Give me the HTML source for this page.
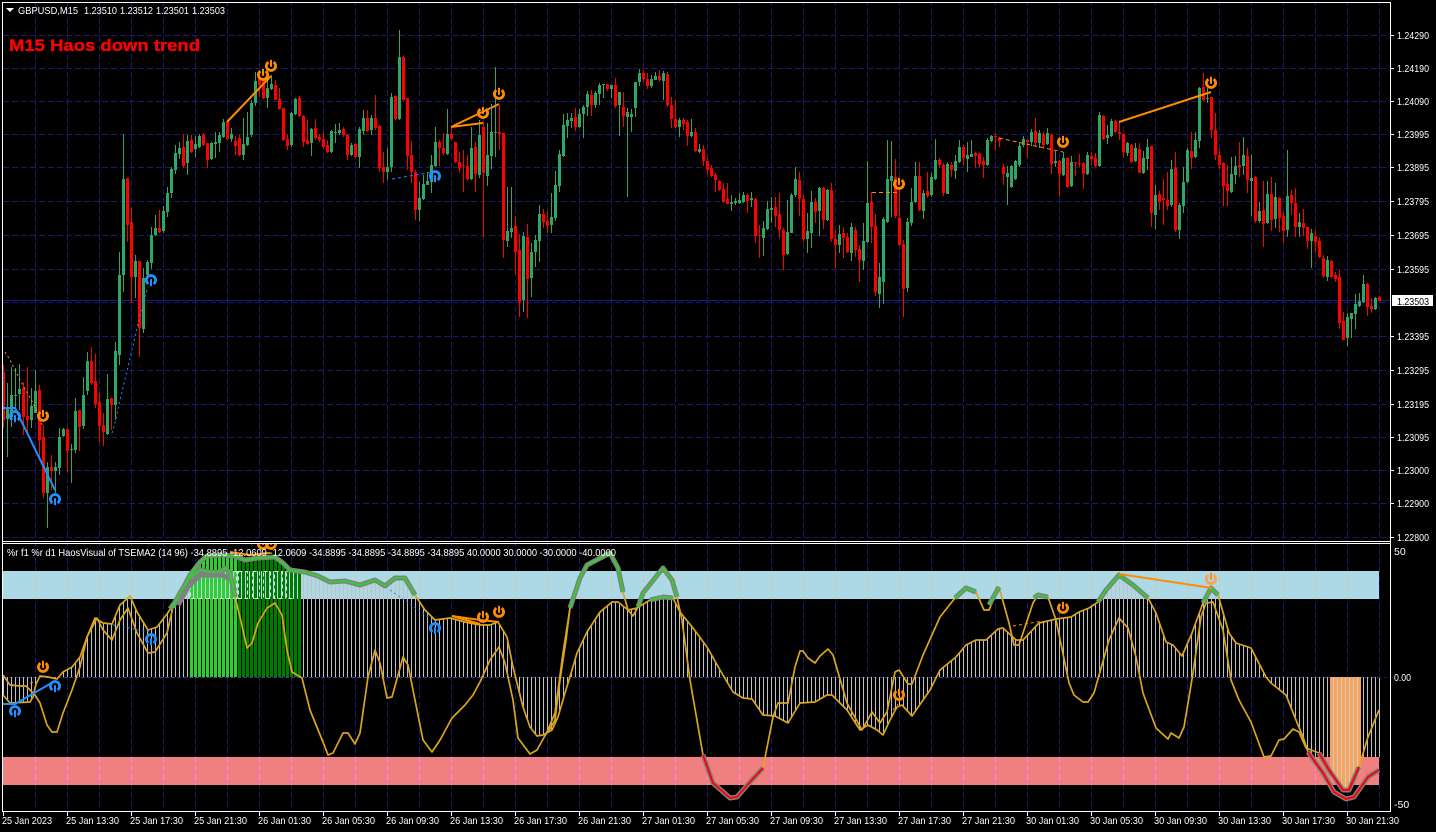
<!DOCTYPE html>
<html><head><meta charset="utf-8"><title>GBPUSD,M15</title>
<style>
html,body{margin:0;padding:0;background:#000;width:1436px;height:832px;overflow:hidden}
svg{display:block}
text{font-family:"Liberation Sans",Arial,sans-serif;font-size:10.5px;fill:#fff}
.c{shape-rendering:crispEdges}
path.c{fill:none}
.w{stroke-width:1}.b{stroke-width:3}
.g{fill:none;stroke:#daa520;stroke-width:1.7;stroke-linejoin:round}
.t{fill:none;stroke:#808080;stroke-width:5;stroke-linejoin:round}
.i{fill:none;stroke:#32cd32;stroke-width:2;stroke-linejoin:round}
.r{fill:none;stroke:#f00;stroke-width:2;stroke-linejoin:round}
.ot{fill:none;stroke:#ff8c00;stroke-width:2}
.bt{fill:none;stroke:#1e90ff;stroke-width:2}
</style></head><body>
<svg xmlns="http://www.w3.org/2000/svg" width="1436" height="832" viewBox="0 0 1436 832">
<defs>
<pattern id="vg" x="3" y="0" width="32" height="9" patternUnits="userSpaceOnUse"><rect width="1" height="6" fill="#191970"/></pattern>
<pattern id="vb" x="3" y="0" width="32" height="9" patternUnits="userSpaceOnUse"><rect width="1" height="6" fill="#c8cca0"/></pattern>
<pattern id="vr" x="3" y="0" width="32" height="9" patternUnits="userSpaceOnUse"><rect width="1" height="6" fill="#ff80ff"/></pattern>
<pattern id="hs" x="3" y="0" width="4" height="4" patternUnits="userSpaceOnUse"><rect width="1" height="4" fill="#c0c0c0"/></pattern>
<pattern id="gl" x="2" y="0" width="4" height="4" patternUnits="userSpaceOnUse"><rect width="3" height="4" fill="#32cd32"/></pattern>
<pattern id="gd" x="2" y="0" width="4" height="4" patternUnits="userSpaceOnUse"><rect width="3" height="4" fill="#007a00"/></pattern>
<pattern id="or" x="2" y="0" width="4" height="4" patternUnits="userSpaceOnUse"><rect width="4" height="4" fill="#d8c8b8"/><rect width="3" height="4" fill="#f4a460"/></pattern>
<g id="o"><path d="M-2.6-3.9A4.6 4.6 0 1 0 2.6-3.9" fill="none" stroke="#ff8c00" stroke-width="2.8"/><path d="M0-6.2V.8" stroke="#ff8c00" stroke-width="2" fill="none"/></g>
<g id="l"><path d="M-2.6-3.9A4.6 4.6 0 1 0 2.6-3.9" fill="none" stroke="#ffa24d" stroke-width="2.8"/><path d="M0-6.2V.8" stroke="#ff8c00" stroke-width="2" fill="none"/></g>
<g id="u"><path d="M-2.6 3.9A4.6 4.6 0 1 1 2.6 3.9" fill="none" stroke="#1e90ff" stroke-width="2.8"/><path d="M0 6.2V-.8" stroke="#1e90ff" stroke-width="2" fill="none"/></g>
<clipPath id="pc"><rect x="3" y="544" width="1387" height="267"/></clipPath>
</defs>
<rect width="1436" height="832" fill="#000"/>

<!-- main grid -->
<rect x="4" y="3" width="1386" height="538" fill="url(#vg)" class="c"/>
<path class="c" stroke="#191970" stroke-dasharray="6 3" d="M3 35.5H1390M3 68.5H1390M3 101.5H1390M3 134.5H1390M3 167.5H1390M3 201.5H1390M3 235.5H1390M3 269.5H1390M3 302.5H1390M3 336.5H1390M3 370.5H1390M3 404.5H1390M3 437.5H1390M3 470.5H1390M3 503.5H1390M3 537.5H1390"/>
<path class="c" stroke="#1c1c8c" d="M3 300.5H1390"/>

<!-- green candles -->
<g transform="translate(.5 0)">
<path class="c w" stroke="#30a565" d="M7 383V457M11 367V427M15 368V413M19 364V410M31 388V428M35 370V413M47 462V528M55 462V493M59 428V475M63 428V437M71 444V483M75 398V453M83 377V429M87 352V395M107 374V435M115 342V420M119 252V365M123 134V292M135 255V298M143 268V333M147 260V283M151 227V269M155 215V236M163 206V233M167 187V217M171 167V198M175 145V174M179 142V159M187 135V175M195 136V157M199 134V148M211 142V160M215 132V158M219 132V152M223 119V138M231 128V142M243 118V160M247 112V146M251 100V137M255 72V106M267 78V108M271 75V90M291 112V147M295 98V115M311 128V156M331 130V153M335 124V143M339 123V135M351 143V156M359 127V168M363 110V135M371 115V135M387 148V180M391 93V172M399 30V120M419 182V221M423 175V200M427 172V185M431 155V193M435 127V167M447 109V155M471 127V180M479 120V178M487 123V186M491 104V169M495 67V157M507 187V247M511 187V238M523 232V312M531 243V297M535 235V267M539 205V262M551 193V233M555 171V221M559 150V192M563 114V157M567 113V138M571 113V128M579 109V128M583 105V138M587 91V116M595 91V108M599 83V105M603 84V98M611 85V98M619 92V136M627 108V197M631 109V132M635 82V117M639 69V86M651 75V88M655 72V80M663 71V100M679 118V137M691 119V137M699 144V153M731 195V211M735 198V205M739 193V204M743 192V203M751 192V207M763 221V256M767 201V230M771 197V223M787 200V255M791 193V233M795 167V197M807 213V253M811 191V248M819 187V236M827 189V221M839 225V253M851 223V261M863 223V270M867 161V243M879 263V308M883 217V304M887 140V223M891 141V217M907 218V292M911 188V226M915 162V203M923 190V219M931 173V197M935 139V180M947 162V194M955 155V179M959 140V163M967 142V172M971 140V157M987 138V166M991 135V142M1007 166V205M1011 165V188M1015 160V180M1019 142V167M1023 136V147M1031 129V146M1039 130V148M1047 128V145M1055 151V167M1063 152V176M1071 156V187M1087 152V175M1099 112V167M1107 125V144M1111 119V137M1127 142V156M1135 143V162M1143 151V174M1147 139V170M1155 185V229M1171 160V207M1179 203V239M1183 167V213M1187 148V183M1195 132V158M1199 87V148M1207 88V103M1231 157V193M1235 156V184M1243 137V175M1251 155V216M1259 202V223M1267 181V224M1275 183V228M1287 150V237M1299 213V237M1311 229V268M1327 256V281M1347 313V346M1351 313V338M1355 294V329M1359 293V307M1363 275V303M1375 297V310"/>
<path class="c b" stroke="#30a565" d="M7 408V419M11 395V417M15 395V396M19 389V394M31 406V420M35 391V413M47 467V493M55 467V471M59 437V468M63 429V436M71 449V450M75 411V450M83 395V426M87 361V391M107 399V434M115 351V405M119 275V355M123 179V275M135 261V277M143 278V329M147 262V275M151 235V263M155 228V235M163 211V231M167 193V212M171 169V193M175 153V170M179 148V154M187 141V163M195 144V149M199 136V147M211 143V159M215 142V144M219 135V143M223 122V137M231 134V139M243 144V155M247 137V145M251 103V135M255 81V103M267 88V98M271 84V89M291 113V145M295 99V114M311 129V143M331 131V152M335 132V133M339 130V133M351 145V155M359 129V157M363 118V131M371 118V130M387 167V172M391 97V167M399 57V119M419 198V210M423 184V199M427 181V185M431 165V182M435 142V166M447 134V154M471 148V179M479 135V175M487 155V176M491 132V156M495 132V133M507 231V241M511 228V232M523 236V300M531 252V278M535 240V252M539 214V241M551 217V225M555 185V218M559 154V186M563 125V156M567 120V126M571 118V121M579 114V127M583 107V114M587 94V107M595 93V105M599 85V94M603 84V85M611 85V89M619 92V105M627 112V117M631 114V117M635 82V108M639 73V82M651 79V86M655 76V80M663 73V81M679 120V127M691 132V136M699 149V152M731 202V204M735 201V203M739 200V203M743 195V202M751 198V200M763 228V238M767 209V229M771 208V210M787 232V254M791 195V233M795 179V195M807 231V239M811 202V233M819 188V211M827 190V220M839 234V245M851 227V253M863 241V261M867 203V242M879 277V294M883 219V282M887 179V222M891 176V181M907 222V288M911 202V223M915 176V202M923 193V211M931 177V195M935 160V179M947 164V194M955 161V171M959 147V162M967 155V159M971 154V157M987 140V165M991 136V141M1007 173V177M1011 166V187M1015 161V179M1019 146V165M1023 139V145M1031 132V142M1039 133V143M1047 133V144M1055 161V163M1063 158V175M1071 162V186M1087 155V174M1099 115V166M1107 135V138M1111 121V136M1127 143V153M1135 148V161M1143 158V173M1147 147V159M1155 195V215M1171 169V205M1179 205V230M1183 182V206M1187 150V182M1195 140V157M1199 88V141M1207 98V99M1231 174V192M1235 166V175M1243 155V166M1251 178V181M1259 211V221M1267 194V223M1275 197V219M1287 196V230M1299 222V227M1311 233V241M1327 260V277M1347 317V338M1351 313V319M1355 304V314M1359 301V306M1363 284V302M1375 298V309"/>
<!-- red candles -->
<path class="c w" stroke="#f00" d="M3 365V428M23 382V435M27 367V433M39 385V457M43 425V498M51 455V490M67 428V472M79 410V451M91 347V385M95 354V408M99 393V442M103 413V446M111 398V430M127 178V242M131 207V303M139 261V357M159 210V233M183 134V168M191 135V153M203 133V146M207 143V168M227 122V140M235 136V155M239 135V156M259 77V97M263 78V99M275 80V100M279 88V110M283 108V141M287 134V150M299 96V117M303 115V147M307 120V145M315 119V140M319 134V142M323 132V148M327 140V153M343 127V137M347 134V160M355 143V158M367 110V132M375 95V130M379 125V172M383 152V183M395 95V120M403 56V101M407 98V170M411 141V183M415 170V220M439 140V166M443 133V155M451 127V140M455 142V163M459 152V173M463 150V192M467 155V180M475 142V192M483 122V237M499 105V150M503 133V258M515 216V274M519 234V317M527 224V318M543 209V228M547 211V233M575 108V131M591 90V116M607 84V91M615 78V108M623 92V127M643 70V82M647 73V89M659 70V82M667 72V107M671 97V128M675 100V128M683 118V130M687 120V146M695 128V152M703 145V166M707 158V175M711 165V177M715 173V192M719 180V191M723 183V203M727 183V204M747 193V213M755 198V243M759 225V258M775 197V227M779 193V239M783 228V270M799 172V216M803 195V242M815 198V223M823 187V229M831 183V242M835 230V268M843 227V258M847 233V253M855 227V257M859 245V282M871 192V243M875 214V296M895 159V218M899 187V246M903 240V317M919 162V211M927 172V198M939 158V168M943 163V196M951 162V177M963 145V165M975 152V168M979 153V167M983 157V178M995 133V151M999 137V147M1003 164V185M1027 140V158M1035 118V146M1043 132V148M1051 134V174M1059 160V197M1067 158V188M1075 162V176M1079 154V167M1083 162V189M1091 152V165M1095 153V167M1103 115V140M1115 120V133M1119 122V140M1123 133V157M1131 144V163M1139 143V173M1151 146V227M1159 191V210M1163 179V225M1167 172V210M1175 152V232M1191 132V169M1203 73V101M1211 97V138M1215 113V160M1219 150V170M1223 162V206M1227 165V206M1239 142V177M1247 148V193M1255 176V223M1263 181V247M1271 177V231M1279 197V232M1283 212V243M1291 190V215M1295 188V237M1303 209V236M1307 227V249M1315 230V252M1319 237V258M1323 255V278M1331 260V278M1335 272V282M1339 270V329M1343 312V340M1367 283V316M1371 298V313M1379 296V301"/>
<path class="c b" stroke="#f00" d="M3 372V420M23 388V417M27 416V420M39 390V440M43 437V493M51 467V471M67 429V451M79 410V427M91 361V383M95 381V404M99 402V426M103 425V432M111 398V405M127 178V225M131 222V277M139 261V328M159 228V232M183 147V166M191 140V152M203 135V145M207 143V160M227 122V139M235 141V146M239 138V155M259 79V85M263 78V98M275 85V100M279 99V109M283 108V140M287 139V146M299 98V116M303 116V142M307 140V144M315 128V138M319 137V140M323 139V147M327 145V152M343 129V135M347 135V155M355 144V157M367 118V131M375 118V128M379 126V168M383 167V172M395 96V119M403 57V100M407 98V156M411 155V172M415 172V210M439 142V148M443 148V153M451 134V139M455 142V162M459 162V168M463 165V166M467 166V179M475 147V174M483 127V173M499 132V134M503 133V240M515 226V252M519 250V302M527 237V279M543 214V222M547 221V226M575 117V127M591 95V105M607 84V89M615 85V106M623 107V116M643 73V79M647 79V86M659 76V80M667 74V105M671 105V119M675 119V127M683 120V124M687 122V136M695 132V151M703 149V161M707 161V170M711 168V176M715 175V180M719 181V190M723 189V202M727 199V204M747 195V201M755 199V236M759 235V236M775 207V216M779 214V230M783 230V255M799 180V199M803 199V239M815 202V212M823 188V220M831 190V239M835 239V245M843 233V238M847 237V252M855 230V250M859 249V260M871 202V227M875 226V292M895 177V216M899 218V245M903 244V289M919 176V210M927 191V196M939 160V165M943 165V193M951 165V170M963 147V158M975 153V156M979 154V164M983 161V165M995 136V137M999 138V141M1003 167V174M1027 140V142M1035 131V143M1043 134V145M1051 135V164M1059 161V174M1067 158V187M1075 162V163M1079 163V164M1083 163V174M1091 156V159M1095 158V166M1103 116V139M1115 121V132M1119 132V134M1123 134V152M1131 145V162M1139 149V173M1151 146V213M1159 194V202M1163 198V200M1167 200V206M1175 168V230M1191 151V158M1203 87V100M1211 97V130M1215 130V155M1219 155V165M1223 163V186M1227 184V191M1239 165V167M1247 156V180M1255 177V221M1263 210V224M1271 194V220M1279 198V218M1283 216V231M1291 195V203M1295 203V227M1303 223V228M1307 227V241M1315 236V242M1319 241V257M1323 258V276M1331 261V277M1335 275V279M1339 277V323M1343 321V340M1367 284V307M1371 306V309M1379 297V301"/>
</g>

<!-- main overlays -->
<path class="ot" d="M227 122L271 76M451 127L499 104M451 127L483 123M1119 122L1211 92"/>
<path class="bt" d="M3 408H15L55 490"/>
<path d="M112 433L115 423L120 400L128 367L137 328L143 303L148 287" fill="none" stroke="#1e90ff" stroke-dasharray="2 3"/>
<path d="M392 179L433 172" fill="none" stroke="#1e90ff" stroke-dasharray="3 3"/>
<path d="M5 352L10 360L20 380L33 403L43 427" fill="none" stroke="#ff9a20" stroke-dasharray="2 3"/>
<path d="M872 192.5H898M999 138L1063 152" fill="none" stroke="#ff8c00" stroke-dasharray="4 3"/>
<use href="#o" x="263" y="75"/><use href="#o" x="271" y="66"/><use href="#o" x="483" y="113"/><use href="#o" x="499" y="94"/><use href="#o" x="899" y="184"/><use href="#o" x="1063" y="142"/><use href="#o" x="1211" y="83"/><use href="#o" x="43" y="416"/>
<use href="#u" x="15" y="416"/><use href="#u" x="55" y="499"/><use href="#u" x="151" y="280"/><use href="#u" x="435" y="176"/>

<!-- lower panel -->
<rect x="3" y="544" width="1387" height="267" fill="#000"/>
<rect x="4" y="544" width="1386" height="267" fill="url(#vg)" class="c"/>
<rect x="3" y="571" width="1376" height="28" fill="#add8e6" class="c"/>
<rect x="3" y="757" width="1376" height="28" fill="#f08080" class="c"/>
<rect x="4" y="571" width="1375" height="28" fill="url(#vb)" class="c"/>
<rect x="4" y="757" width="1375" height="28" fill="url(#vr)" class="c"/>
<path class="c" stroke="#3a3a90" stroke-dasharray="4 2" d="M3 677.5H1379"/>

<!-- histogram -->
<polygon class="c" fill="url(#hs)" points="3,677 3,695 10,703 30,702 33,697 36,684 40,676 48,677 57,679 63,672 72,667 80,657 87,637 95,618 103,623 112,624 120,605 130,596 137,612 148,630 157,627 167,614 175,602 182,590 190,575 200,562 207,556 220,555 235,556 245,560 258,558 275,557 283,563 290,570 305,572 318,576 330,582 345,581 360,585 375,580 385,586 395,578 405,578 415,595 425,610 435,620 450,618 465,622 480,625 490,625 498,622 507,637 513,667 518,687 523,707 530,727 537,736 543,735 552,730 558,717 565,693 572,670 577,653 587,632 600,612 612,602 618,602 628,610 637,608 650,600 663,597 673,598 680,612 693,628 707,647 720,670 733,692 743,698 752,699 763,715 775,716 788,723 800,703 815,702 827,695 832,695 847,710 860,730 868,725 877,730 883,735 890,720 897,707 902,705 912,716 930,690 940,670 956,657 966,645 976,640 986,640 998,629 1003,628 1016,640 1023,640 1039,623 1056,619 1071,617 1079,612 1089,608 1098,602 1106,590 1119,575 1133,585 1148,598 1156,613 1166,642 1173,645 1182,656 1192,633 1203,603 1211,588 1218,595 1229,633 1236,643 1251,648 1266,677 1271,683 1286,695 1296,720 1303,737 1306,750 1308,757 1380,757 1380,677"/>
<polygon class="c" fill="url(#gl)" points="190,677 190,575 200,562 207,556 220,555 237,556 237,677"/>
<polygon class="c" fill="url(#gd)" points="237,677 237,556 245,560 258,558 275,557 283,563 290,570 301,571 301,677"/>
<polygon class="c" fill="url(#or)" points="1330,677 1330,778 1343,790 1349,790 1361,772 1361,677"/>
<path d="M190.5 571.5V598.5H236.5V571.5ZM238.5 571.5H247.5V598.5H238.5ZM252.5 571.5H259.5V598.5H252.5ZM263.5 571.5H270.5V598.5H263.5ZM274.5 571.5H282.5V598.5H274.5ZM286.5 571.5H293.5V598.5H286.5Z" class="c" stroke="#d8f0d8" stroke-dasharray="4 3"/>

<!-- curves -->
<polyline class="g" points="3,695 10,703 30,702 33,697 36,684 40,676 48,677 57,679 63,672 72,667 80,657 87,637 95,618 103,623 112,624 120,605 130,596 137,612 148,630 157,627 167,614 175,602 182,590 190,575 200,562 207,556 220,555 235,556 245,560 258,558 275,557 283,563 290,570 305,572 318,576 330,582 345,581 360,585 375,580 385,586 395,578 405,578 415,595 425,610 435,620 450,618 465,622 480,625 490,625 498,622 507,637 513,667 518,687 523,707 530,727 537,736 543,735 552,730 558,717 565,693 572,670 577,653 587,632 600,612 612,602 618,602 628,610 637,608 650,600 663,597 673,598 680,612 693,628 707,647 720,670 733,692 743,698 752,699 763,715 775,716 788,723 800,703 815,702 827,695 832,695 847,710 860,730 868,725 877,730 883,735 890,720 897,707 902,705 912,716 930,690 940,670 956,657 966,645 976,640 986,640 998,629 1003,628 1016,640 1023,640 1039,623 1056,619 1071,617 1079,612 1089,608 1098,602 1106,590 1119,575 1133,585 1148,598 1156,613 1166,642 1173,645 1182,656 1192,633 1203,603 1211,588 1218,595 1229,633 1236,643 1251,648 1266,677 1271,683 1286,695 1296,720 1303,737 1308,752"/>
<polyline class="g" points="3,675 10,685 20,686 26,686 35,695 40,703 47,725 52,732 57,732 63,713 72,690 80,667 87,637 97,618 103,630 112,640 120,620 128,608 137,633 148,653 155,652 167,633 173,607 180,593 190,577 200,570 210,572 220,572 225,568 230,573 235,597 240,617 247,648 252,643 258,623 267,608 275,603 282,615 287,650 292,672 302,678 310,710 325,747 328,755 333,753 343,733 348,733 355,744 360,733 368,677 375,650 380,663 387,698 392,697 403,657 408,665 417,710 423,740 432,752 440,740 452,718 465,705 473,695 480,682 490,660 499,647 505,663 513,700 518,738 530,754 537,750 547,732 555,713 563,653 570,608 580,578 587,565 610,553 618,568 623,592 628,610 633,616 638,607 643,593 663,568 672,580 677,597 682,620 690,680 703,755 713,783 730,798 737,797 750,782 763,768 773,717 778,703 788,703 795,667 800,651 803,651 808,658 815,663 820,656 828,649 833,655 847,703 862,730 872,712 880,723 887,712 895,672 899,670 908,684 912,684 923,655 940,617 955,598 966,588 976,592 984,610 989,610 999,587 1009,623 1014,645 1019,645 1033,603 1038,595 1048,597 1056,620 1069,683 1074,695 1083,702 1088,702 1094,693 1109,640 1119,618 1128,628 1136,657 1143,693 1156,728 1168,739 1171,733 1179,738 1184,727 1193,673 1201,617 1206,603 1213,602 1223,630 1231,680 1239,700 1251,722 1264,757 1271,756 1279,740 1284,739 1293,729 1299,732 1306,748 1319,753"/>
<polyline class="g" points="548,732 555,720 560,680 566,640 570,608"/>
<polyline class="g" points="1359,767 1368,737 1379,710"/>

<!-- thick segments -->
<path class="t" d="M170 609L175 602L182 590L190 575L200 562L207 556L220 555L235 556L245 560L258 558L275 557L283 563L290 570L305 572L318 576L330 582L345 581L360 585L375 580L385 586L395 578L405 578L415 595M173 607L180 593L190 577L200 570L210 572L220 572L225 568L230 573L235 597M178 605L188 587L200 575L212 575L222 575L228 578M570 608L580 578L587 565L610 553L618 568L623 592M638 607L643 593L663 568L672 580L677 597M650 600L663 597L673 598M955 598L966 588L976 592M989 605L999 587M1034 598L1038 595L1048 597M1098 602L1106 590L1119 575L1133 585L1148 598M1203 603L1211 588L1218 595M703 755L713 783L730 798L737 797L750 782L763 768M1308 752L1323 773L1334 792L1346 799L1354 797L1368 777L1379 770M1319 753L1329 770L1343 790L1349 790L1359 767"/>
<path class="i" d="M170 609L175 602L182 590L190 575L200 562L207 556L220 555L235 556L245 560L258 558L275 557L283 563L290 570L305 572L318 576L330 582L345 581L360 585L375 580L385 586L395 578L405 578L415 595M173 607L180 593L190 577L200 570L210 572L220 572L225 568L230 573L235 597M570 608L580 578L587 565L610 553L618 568L623 592M638 607L643 593L663 568L672 580L677 597M650 600L663 597L673 598M955 598L966 588L976 592M989 605L999 587M1034 598L1038 595L1048 597M1098 602L1106 590L1119 575L1133 585L1148 598M1203 603L1211 588L1218 595"/>
<path class="r" d="M703 755L713 783L730 798L737 797L750 782L763 768M1308 752L1323 773L1334 792L1346 799L1354 797L1368 777L1379 770M1319 753L1329 770L1343 790L1349 790L1359 767"/>

<!-- lower overlays -->
<path class="ot" d="M230 552L250 555L270 553M452 616L480 620L499 622M452 616L480 624M1119 574L1212 588"/>
<path class="bt" d="M3 704H15L55 681"/>
<path d="M113 625L150 632M390 590L435 622" fill="none" stroke="#1e90ff" stroke-dasharray="2 3"/>
<path d="M893 710L898 704M1013 626L1043 621M30 683L36 682" fill="none" stroke="#ff8c00" stroke-dasharray="3 3"/>
<g clip-path="url(#pc)"><use href="#o" x="263" y="544"/><use href="#o" x="271" y="544"/></g>
<use href="#o" x="43" y="667"/><use href="#o" x="483" y="617"/><use href="#o" x="499" y="612"/><use href="#o" x="899" y="695"/><use href="#o" x="1063" y="608"/><use href="#l" x="1211" y="579"/>
<use href="#u" x="15" y="711"/><use href="#u" x="55" y="686"/><use href="#u" x="151" y="639"/><use href="#u" x="435" y="628"/>

<!-- frames -->
<path class="c" stroke="#fff" d="M2.5 2V812M2 2.5H1391M1390.5 2V812M2 541.5H1391M2 543.5H1391M2 811.5H1391"/>
<path class="c" stroke="#fff" d="M1391 35.5h3M1391 68.5h3M1391 101.5h3M1391 134.5h3M1391 167.5h3M1391 201.5h3M1391 235.5h3M1391 269.5h3M1391 336.5h3M1391 370.5h3M1391 404.5h3M1391 437.5h3M1391 470.5h3M1391 503.5h3M1391 537.5h3M3.5 812v4M67.5 812v4M131.5 812v4M195.5 812v4M259.5 812v4M323.5 812v4M387.5 812v4M451.5 812v4M515.5 812v4M579.5 812v4M643.5 812v4M707.5 812v4M771.5 812v4M835.5 812v4M899.5 812v4M963.5 812v4M1027.5 812v4M1091.5 812v4M1155.5 812v4M1219.5 812v4M1283.5 812v4M1347.5 812v4"/>
<path class="c" stroke="#191970" stroke-dasharray="3 2" d="M1379 677.5H1390"/>

<!-- header text -->
<path d="M6 8h8l-4 4z" fill="#fff"/>
<text x="18" y="14" textLength="60" lengthAdjust="spacingAndGlyphs">GBPUSD,M15</text>
<text x="84" y="14" textLength="33" lengthAdjust="spacingAndGlyphs">1.23510</text>
<text x="120" y="14" textLength="33" lengthAdjust="spacingAndGlyphs">1.23512</text>
<text x="156" y="14" textLength="33" lengthAdjust="spacingAndGlyphs">1.23501</text>
<text x="192" y="14" textLength="33" lengthAdjust="spacingAndGlyphs">1.23503</text>
<text x="9" y="51" textLength="191" lengthAdjust="spacingAndGlyphs" style="font-size:17px;font-weight:bold;fill:#f00;stroke:#f00;stroke-width:.35">M15 Haos down trend</text>
<text x="7" y="556" textLength="609" lengthAdjust="spacingAndGlyphs">%r f1 %r d1 HaosVisual of TSEMA2 (14 96) -34.8895 -12.0609 -12.0609 -34.8895 -34.8895 -34.8895 -34.8895 40.0000 30.0000 -30.0000 -40.0000</text>

<!-- price axis -->
<g>
<text x="1397" y="39" textLength="32" lengthAdjust="spacingAndGlyphs">1.24290</text>
<text x="1397" y="72" textLength="32" lengthAdjust="spacingAndGlyphs">1.24190</text>
<text x="1397" y="105" textLength="32" lengthAdjust="spacingAndGlyphs">1.24090</text>
<text x="1397" y="138" textLength="32" lengthAdjust="spacingAndGlyphs">1.23995</text>
<text x="1397" y="171" textLength="32" lengthAdjust="spacingAndGlyphs">1.23895</text>
<text x="1397" y="205" textLength="32" lengthAdjust="spacingAndGlyphs">1.23795</text>
<text x="1397" y="239" textLength="32" lengthAdjust="spacingAndGlyphs">1.23695</text>
<text x="1397" y="273" textLength="32" lengthAdjust="spacingAndGlyphs">1.23595</text>
<text x="1397" y="340" textLength="32" lengthAdjust="spacingAndGlyphs">1.23395</text>
<text x="1397" y="374" textLength="32" lengthAdjust="spacingAndGlyphs">1.23295</text>
<text x="1397" y="408" textLength="32" lengthAdjust="spacingAndGlyphs">1.23195</text>
<text x="1397" y="441" textLength="32" lengthAdjust="spacingAndGlyphs">1.23095</text>
<text x="1397" y="474" textLength="32" lengthAdjust="spacingAndGlyphs">1.23000</text>
<text x="1397" y="507" textLength="32" lengthAdjust="spacingAndGlyphs">1.22900</text>
<text x="1397" y="541" textLength="32" lengthAdjust="spacingAndGlyphs">1.22800</text>
</g>
<rect x="1392" y="295" width="41" height="11" fill="#fff" class="c"/>
<text x="1397" y="305" textLength="32" lengthAdjust="spacingAndGlyphs" style="fill:#000">1.23503</text>
<text x="1394" y="555">50</text>
<text x="1394" y="681" textLength="17" lengthAdjust="spacingAndGlyphs">0.00</text>
<text x="1394" y="808">-50</text>

<!-- time axis -->
<g>
<text x="2" y="824" textLength="50" lengthAdjust="spacingAndGlyphs">25 Jan 2023</text>
<text x="66" y="824" textLength="53" lengthAdjust="spacingAndGlyphs">25 Jan 13:30</text>
<text x="130" y="824" textLength="53" lengthAdjust="spacingAndGlyphs">25 Jan 17:30</text>
<text x="194" y="824" textLength="53" lengthAdjust="spacingAndGlyphs">25 Jan 21:30</text>
<text x="258" y="824" textLength="53" lengthAdjust="spacingAndGlyphs">26 Jan 01:30</text>
<text x="322" y="824" textLength="53" lengthAdjust="spacingAndGlyphs">26 Jan 05:30</text>
<text x="386" y="824" textLength="53" lengthAdjust="spacingAndGlyphs">26 Jan 09:30</text>
<text x="450" y="824" textLength="53" lengthAdjust="spacingAndGlyphs">26 Jan 13:30</text>
<text x="514" y="824" textLength="53" lengthAdjust="spacingAndGlyphs">26 Jan 17:30</text>
<text x="578" y="824" textLength="53" lengthAdjust="spacingAndGlyphs">26 Jan 21:30</text>
<text x="642" y="824" textLength="53" lengthAdjust="spacingAndGlyphs">27 Jan 01:30</text>
<text x="706" y="824" textLength="53" lengthAdjust="spacingAndGlyphs">27 Jan 05:30</text>
<text x="770" y="824" textLength="53" lengthAdjust="spacingAndGlyphs">27 Jan 09:30</text>
<text x="834" y="824" textLength="53" lengthAdjust="spacingAndGlyphs">27 Jan 13:30</text>
<text x="898" y="824" textLength="53" lengthAdjust="spacingAndGlyphs">27 Jan 17:30</text>
<text x="962" y="824" textLength="53" lengthAdjust="spacingAndGlyphs">27 Jan 21:30</text>
<text x="1026" y="824" textLength="53" lengthAdjust="spacingAndGlyphs">30 Jan 01:30</text>
<text x="1090" y="824" textLength="53" lengthAdjust="spacingAndGlyphs">30 Jan 05:30</text>
<text x="1154" y="824" textLength="53" lengthAdjust="spacingAndGlyphs">30 Jan 09:30</text>
<text x="1218" y="824" textLength="53" lengthAdjust="spacingAndGlyphs">30 Jan 13:30</text>
<text x="1282" y="824" textLength="53" lengthAdjust="spacingAndGlyphs">30 Jan 17:30</text>
<text x="1346" y="824" textLength="53" lengthAdjust="spacingAndGlyphs">30 Jan 21:30</text>
</g>
</svg>
</body></html>
